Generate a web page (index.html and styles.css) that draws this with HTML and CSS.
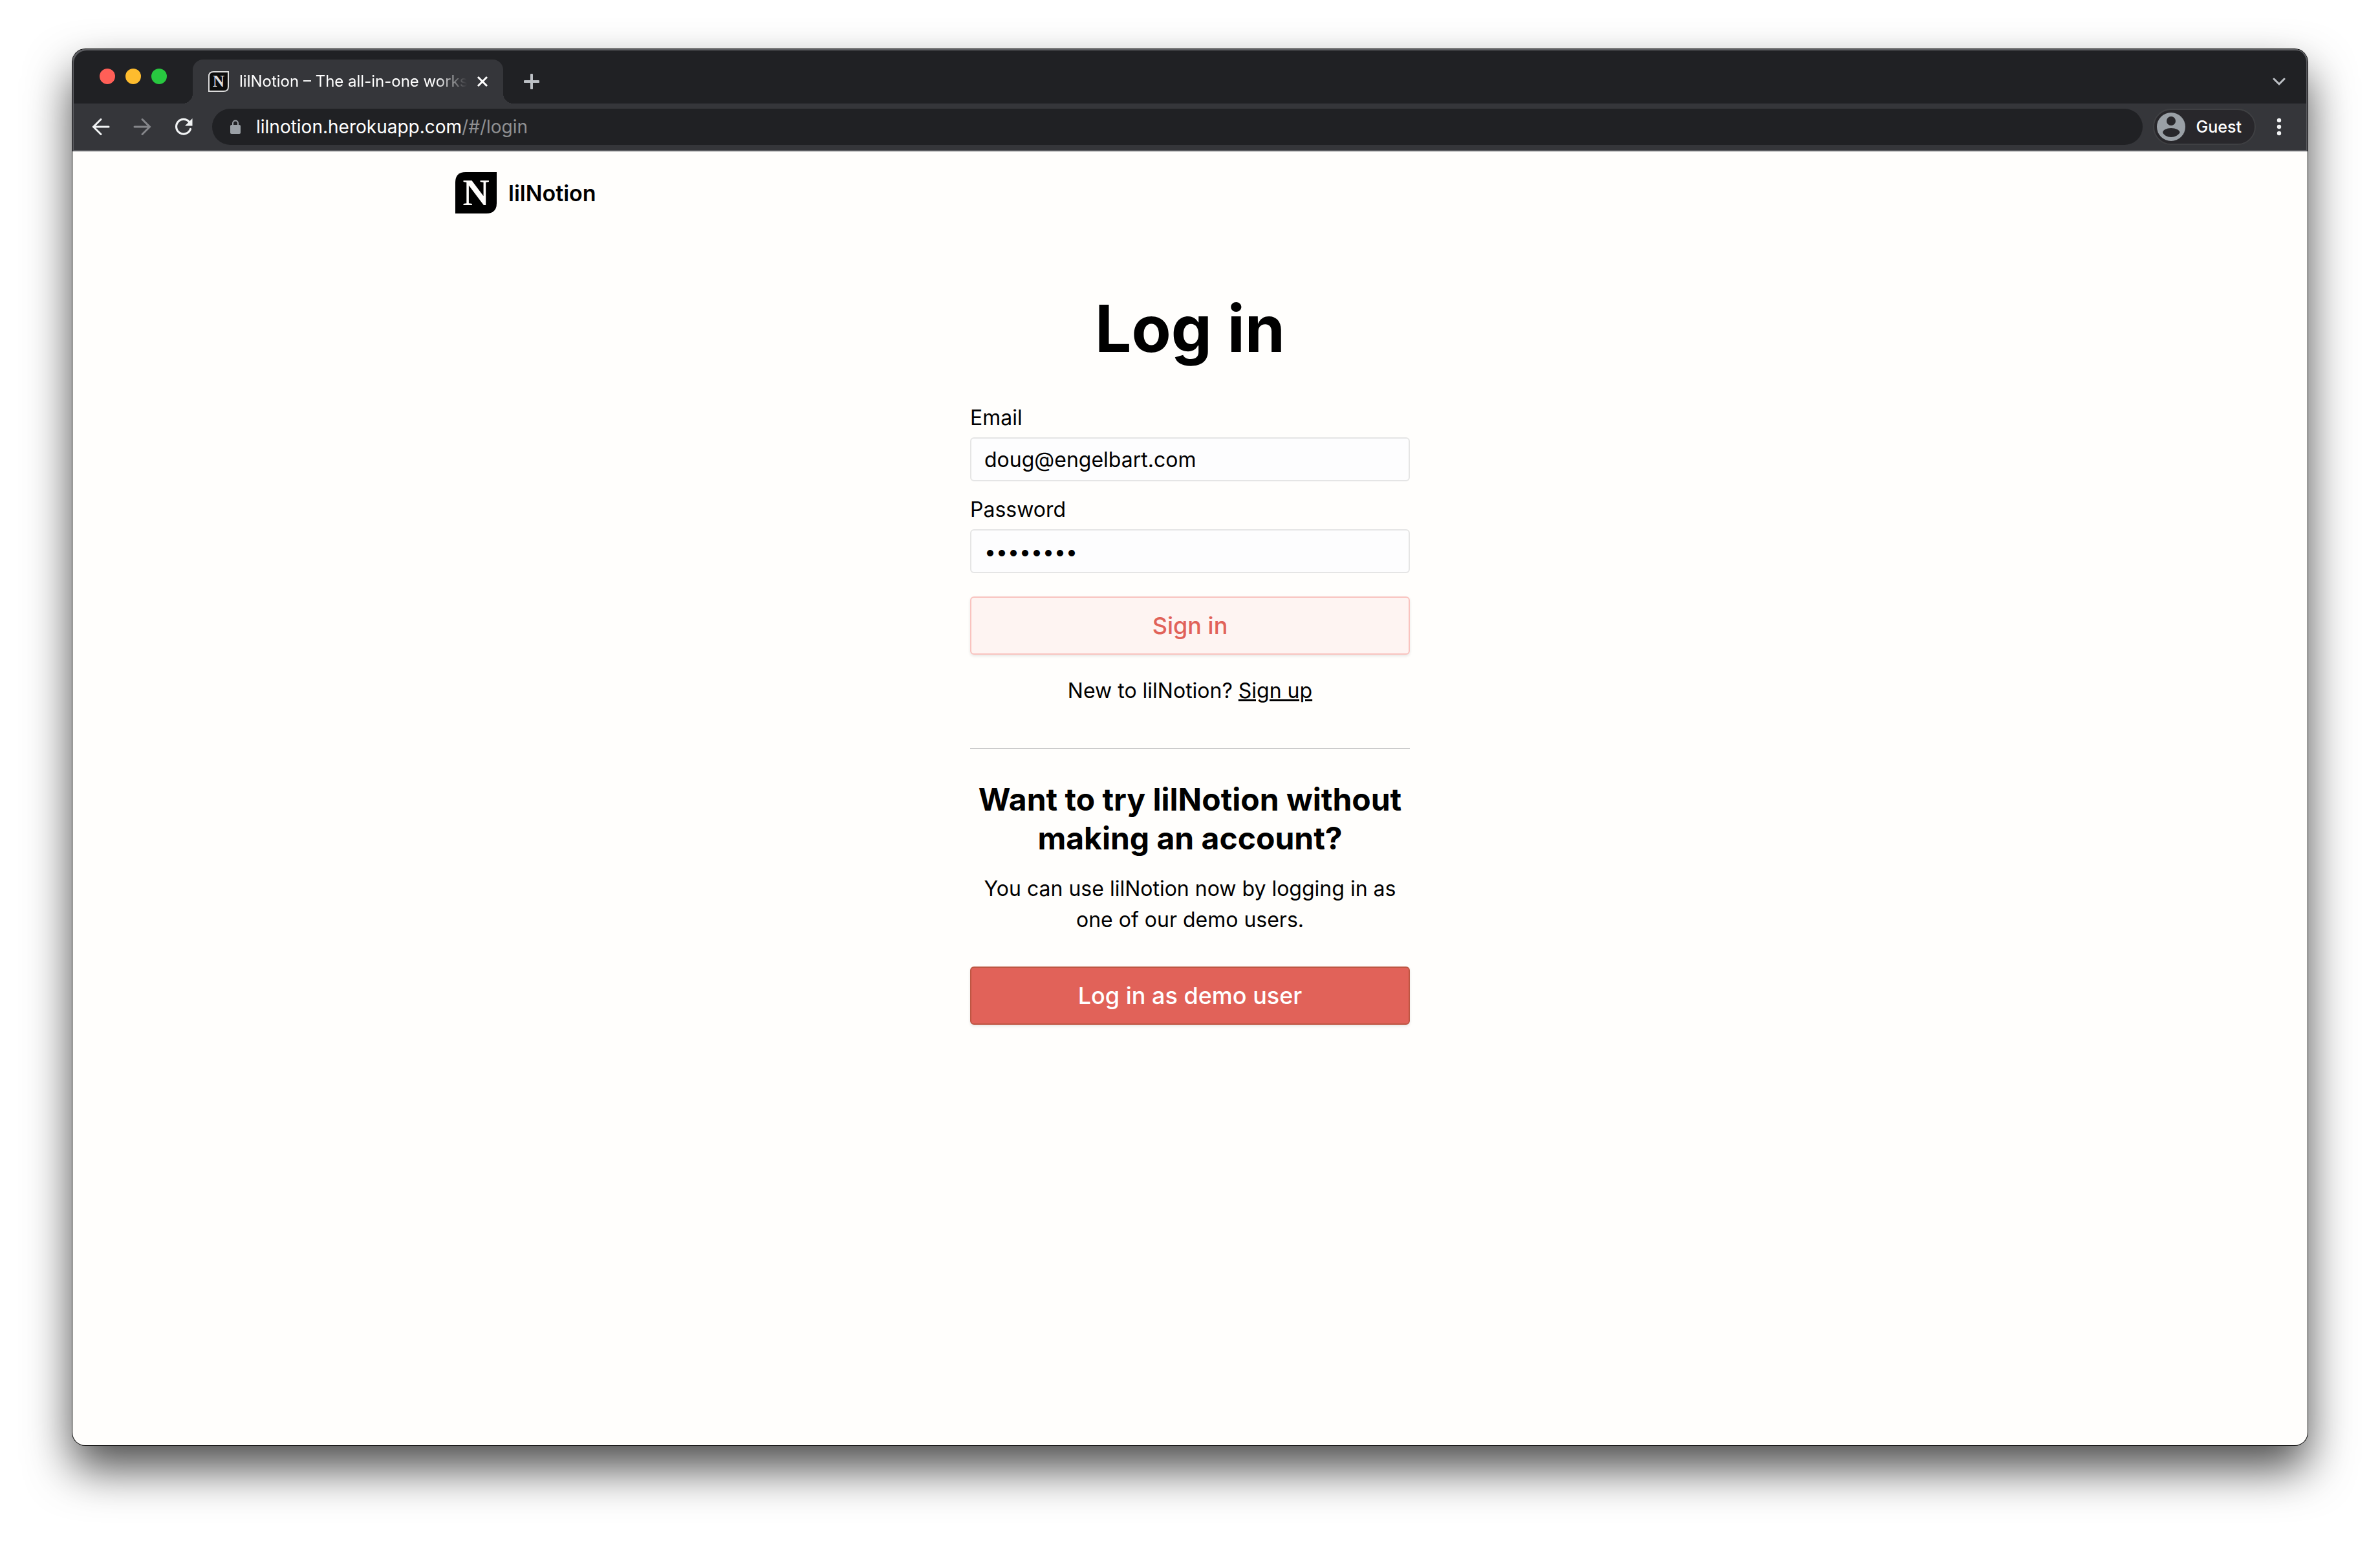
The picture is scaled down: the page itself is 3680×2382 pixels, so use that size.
FILE: index.html
```html
<!DOCTYPE html>
<html lang="en">
<head>
<meta charset="utf-8">
<meta name="viewport" content="width=device-width, initial-scale=1">
<title>lilNotion – The all-in-one workspace</title>
<link rel="stylesheet" href="styles.css">
</head>
<body>
<div class="window">
  <div class="tab-strip">
    <div class="lights">
      <button class="light light-close" aria-label="Close window"></button>
      <button class="light light-min" aria-label="Minimize window"></button>
      <button class="light light-max" aria-label="Zoom window"></button>
    </div>
    <div class="tab">
      <svg class="favicon" viewBox="0 0 32 32" aria-hidden="true">
        <path d="M8 1H31V24Q31 31 24 31H1V8Q1 1 8 1Z" fill="#0c0c0c" stroke="#dcdcdc" stroke-width="2"/>
        <text x="16" y="24" text-anchor="middle" class="favicon-letter">N</text>
      </svg>
      <span class="tab-title">lilNotion – The all-in-one workspace</span>
      <button class="icon-button tab-close" aria-label="Close tab">
        <svg viewBox="0 0 20 20" width="20" height="20"><path d="M3 3L17 17M17 3L3 17" stroke="#fff" stroke-width="3"/></svg>
      </button>
    </div>
    <button class="icon-button new-tab" aria-label="New tab">
      <svg viewBox="0 0 24 24" width="24" height="24"><path d="M12 1.500V22.500M1.500 12H22.500" stroke="#bdc1c6" stroke-width="4" stroke-linecap="round"/></svg>
    </button>
    <button class="icon-button tab-search" aria-label="Search tabs">
      <svg viewBox="0 0 20 20" width="20" height="20"><path d="M2 6L10 14L18 6" fill="none" stroke="#bdc1c6" stroke-width="3" stroke-linecap="round"/></svg>
    </button>
  </div>

  <div class="toolbar">
    <div class="nav-buttons">
      <button class="icon-button" aria-label="Back">
        <svg viewBox="0 0 28 28" width="28" height="28"><path d="M26 14H3M14 2.500L2.500 14L14 25.500" fill="none" stroke="#f1f3f4" stroke-width="3" stroke-linecap="round"/></svg>
      </button>
      <button class="icon-button" aria-label="Forward">
        <svg viewBox="0 0 28 28" width="28" height="28"><path d="M2 14H25M14 2.500L25.500 14L14 25.500" fill="none" stroke="#85868a" stroke-width="3" stroke-linecap="round"/></svg>
      </button>
      <button class="icon-button" aria-label="Reload">
        <svg viewBox="0 0 28 28" width="28" height="28"><path d="M24.500 17.500A11.300 11.300 0 1 1 22.500 6.500" fill="none" stroke="#f1f3f4" stroke-width="3.200" stroke-linecap="round"/><path d="M27.500 1V12.500H16Z" fill="#f1f3f4"/></svg>
      </button>
    </div>
    <div class="omnibox">
      <svg class="lock" viewBox="0 0 16 22" aria-hidden="true"><path d="M4 9V5.500A4 4 0 0 1 12 5.500V9" fill="none" stroke="#9aa0a6" stroke-width="2"/><rect y="8" width="16" height="14" rx="2" fill="#9aa0a6"/></svg>
      <div class="url" role="textbox" contenteditable="true" spellcheck="false" aria-label="Address">lilnotion.herokuapp.com<span class="url-path">/#/login</span></div>
    </div>
    <button class="profile">
      <svg viewBox="0 0 44 44" width="44" height="44" aria-hidden="true"><circle cx="22" cy="22" r="22" fill="#9aa0a6"/><circle cx="22" cy="13" r="7" fill="#28272b"/><path d="M9 31C9 27 15 24 22 24S35.500 27 35.500 31C33 35 28 38 22 38S11 35 9 31Z" fill="#28272b"/></svg>
      <span>Guest</span>
    </button>
    <button class="icon-button menu" aria-label="Menu">
      <svg viewBox="0 0 8 28" width="8" height="28" fill="#f1f3f4"><circle cx="4" cy="4" r="3.200"/><circle cx="4" cy="14" r="3.200"/><circle cx="4" cy="24" r="3.200"/></svg>
    </button>
  </div>

  <div class="page">
    <header class="site-header">
      <a class="brand" href="#/">
        <svg class="brand-mark" viewBox="0 0 64 64" aria-hidden="true">
          <path d="M16 0H64V48Q64 64 48 64H0V16Q0 0 16 0Z"/>
          <text x="32" y="51" text-anchor="middle" class="brand-letter">N</text>
        </svg>
        <span>lilNotion</span>
      </a>
    </header>
    <main class="login">
      <h1>Log in</h1>
      <form class="login-form">
        <div class="field">
          <label for="email">Email</label>
          <input id="email" type="email" value="doug@engelbart.com">
        </div>
        <div class="field">
          <label for="password">Password</label>
          <input id="password" type="password" value="mouse123">
        </div>
        <button class="button button-light" type="submit">Sign in</button>
      </form>
      <p class="signup">New to lilNotion? <a href="#/signup">Sign up</a></p>
      <hr>
      <h2>Want to try lilNotion without making an account?</h2>
      <p class="demo-text">You can use lilNotion now by logging in as one of our demo users.</p>
      <button class="button button-solid" type="button">Log in as demo user</button>
    </main>
  </div>
</div>
</body>
</html>
```
FILE: styles.css
```css
* {
  box-sizing: border-box;
}

body {
  margin: 0;
  min-height: 100vh;
  padding: 76px 112px 148px;
  display: flex;
  flex-direction: column;
  background: #fff;
  color: #000;
  font-family: Inter, "Liberation Sans", sans-serif;
  font-size: 32px;
}

button,
input {
  font-family: inherit;
  margin: 0;
}

h1,
h2,
p {
  margin: 0;
}

a {
  color: inherit;
}

.window {
  flex: 1;
  display: flex;
  flex-direction: column;
  border-radius: 20px;
  background: #fffefc;
  box-shadow: 0 0 0 1px #000, 0 36px 70px rgba(0, 0, 0, 0.7);
}

/* Browser chrome */

.tab-strip {
  height: 84px;
  display: flex;
  align-items: flex-end;
  padding: 0 28px 0 42px;
  border-radius: 20px 20px 0 0;
  background: #202124;
  box-shadow: inset 2px 2px 0 #5d5e62, inset -2px 0 0 #5d5e62;
}

.lights {
  align-self: center;
  display: flex;
  gap: 16px;
  margin-right: 40px;
}

.light {
  width: 24px;
  height: 24px;
  padding: 0;
  border: 0;
  border-radius: 50%;
}

.light-close {
  background: #ff5f57;
}

.light-min {
  background: #febc2e;
}

.light-max {
  background: #28c840;
}

.tab {
  position: relative;
  width: 480px;
  height: 68px;
  padding: 0 20px 0 24px;
  display: flex;
  align-items: center;
  border-radius: 16px 16px 0 0;
  background: #35363a;
}

.tab::before,
.tab::after {
  content: "";
  position: absolute;
  bottom: 0;
  width: 16px;
  height: 16px;
}

.tab::before {
  right: 100%;
  background: radial-gradient(circle at 0 0, transparent 16px, #35363a 16px);
}

.tab::after {
  left: 100%;
  background: radial-gradient(circle at 100% 0, transparent 16px, #35363a 16px);
}

.favicon {
  flex: none;
  width: 32px;
  height: 32px;
  margin-right: 16px;
}

.favicon-letter {
  font: bold 25px "Liberation Serif", serif;
  fill: #dcdcdc;
}

.tab-title {
  flex: 1;
  min-width: 0;
  overflow: hidden;
  white-space: nowrap;
  color: #fff;
  font-size: 24px;
  line-height: 32px;
  mask-image: linear-gradient(to left, transparent, #000 48px);
}

.icon-button {
  display: flex;
  align-items: center;
  justify-content: center;
  padding: 0;
  border: 0;
  background: none;
}

.tab-close {
  width: 24px;
  height: 24px;
  margin-left: 12px;
}

.new-tab,
.tab-search {
  width: 56px;
  height: 68px;
}

.new-tab {
  margin-left: 16px;
}

.tab-search {
  width: 32px;
  margin-left: auto;
}

.toolbar {
  height: 74px;
  padding: 0 40px 0 30px;
  display: flex;
  align-items: center;
  background: #35363a;
  border-bottom: 2px solid #5d5e62;
  box-shadow: inset 2px 0 0 #5d5e62, inset -2px 0 0 #5d5e62;
}

.nav-buttons {
  display: flex;
  gap: 36px;
  margin-right: 30px;
}

.omnibox {
  flex: 1;
  height: 56px;
  padding: 0 28px;
  display: flex;
  align-items: center;
  gap: 24px;
  border-radius: 28px;
  background: #202124;
}

.lock {
  width: 16px;
  height: 22px;
}

.url {
  color: #fff;
  font-size: 28px;
  line-height: 36px;
}

.url-path {
  color: #8e8f91;
}

.profile {
  height: 56px;
  margin: 0 32px 0 16px;
  padding: 0 20px 0 4px;
  display: flex;
  align-items: center;
  gap: 17px;
  border: 2px solid #3f4043;
  border-radius: 28px;
  background: #28272b;
  color: #fff;
  font-size: 25px;
  font-weight: 500;
}

/* Page */

.site-header {
  width: 100%;
  max-width: 2272px;
  margin: 0 auto;
  padding: 32px 0;
}

.brand {
  display: inline-flex;
  align-items: center;
  gap: 18px;
  font-size: 34px;
  font-weight: 600;
  text-decoration: none;
  vertical-align: top;
}

.brand-mark {
  width: 64px;
  height: 64px;
}

.brand-letter {
  font: bold 57px "Liberation Serif", serif;
  fill: #fffefc;
}

.login {
  width: 100%;
  max-width: 680px;
  margin: 0 auto;
  padding: 86px 0 100px;
  line-height: 48px;
  text-align: center;
}

.login h1 {
  margin-bottom: 58px;
  font-size: 100px;
  font-weight: 700;
  line-height: 120px;
}

.login-form {
  text-align: left;
}

.field {
  display: flex;
  flex-direction: column;
  gap: 10px;
  margin-bottom: 24px;
  line-height: 40px;
}

.field input {
  height: 68px;
  padding: 0 20px;
  border: 2px solid #e5e5e5;
  border-radius: 6px;
  outline: 0;
  background: #fdfdfe;
  color: #000;
  font-size: 32px;
}

.button {
  width: 100%;
  height: 90px;
  border: 2px solid;
  border-radius: 6px;
  box-shadow: 0 2px 4px rgba(0, 0, 0, 0.1);
  font-size: 36px;
  font-weight: 500;
}

.button-light {
  margin-top: 12px;
  border-color: #f9c3bf;
  background: #fef4f2;
  color: #e16259;
}

.button-solid {
  border-color: #be5643;
  background: #e16259;
  color: #fff;
}

.signup {
  margin-top: 32px;
}

.login hr {
  height: 2px;
  margin: 64px 0 48px;
  border: 0;
  background: #ccc;
}

.login h2 {
  margin-bottom: 24px;
  font-size: 48px;
  font-weight: 700;
  line-height: 60px;
}

.demo-text {
  margin-bottom: 48px;
}
```
